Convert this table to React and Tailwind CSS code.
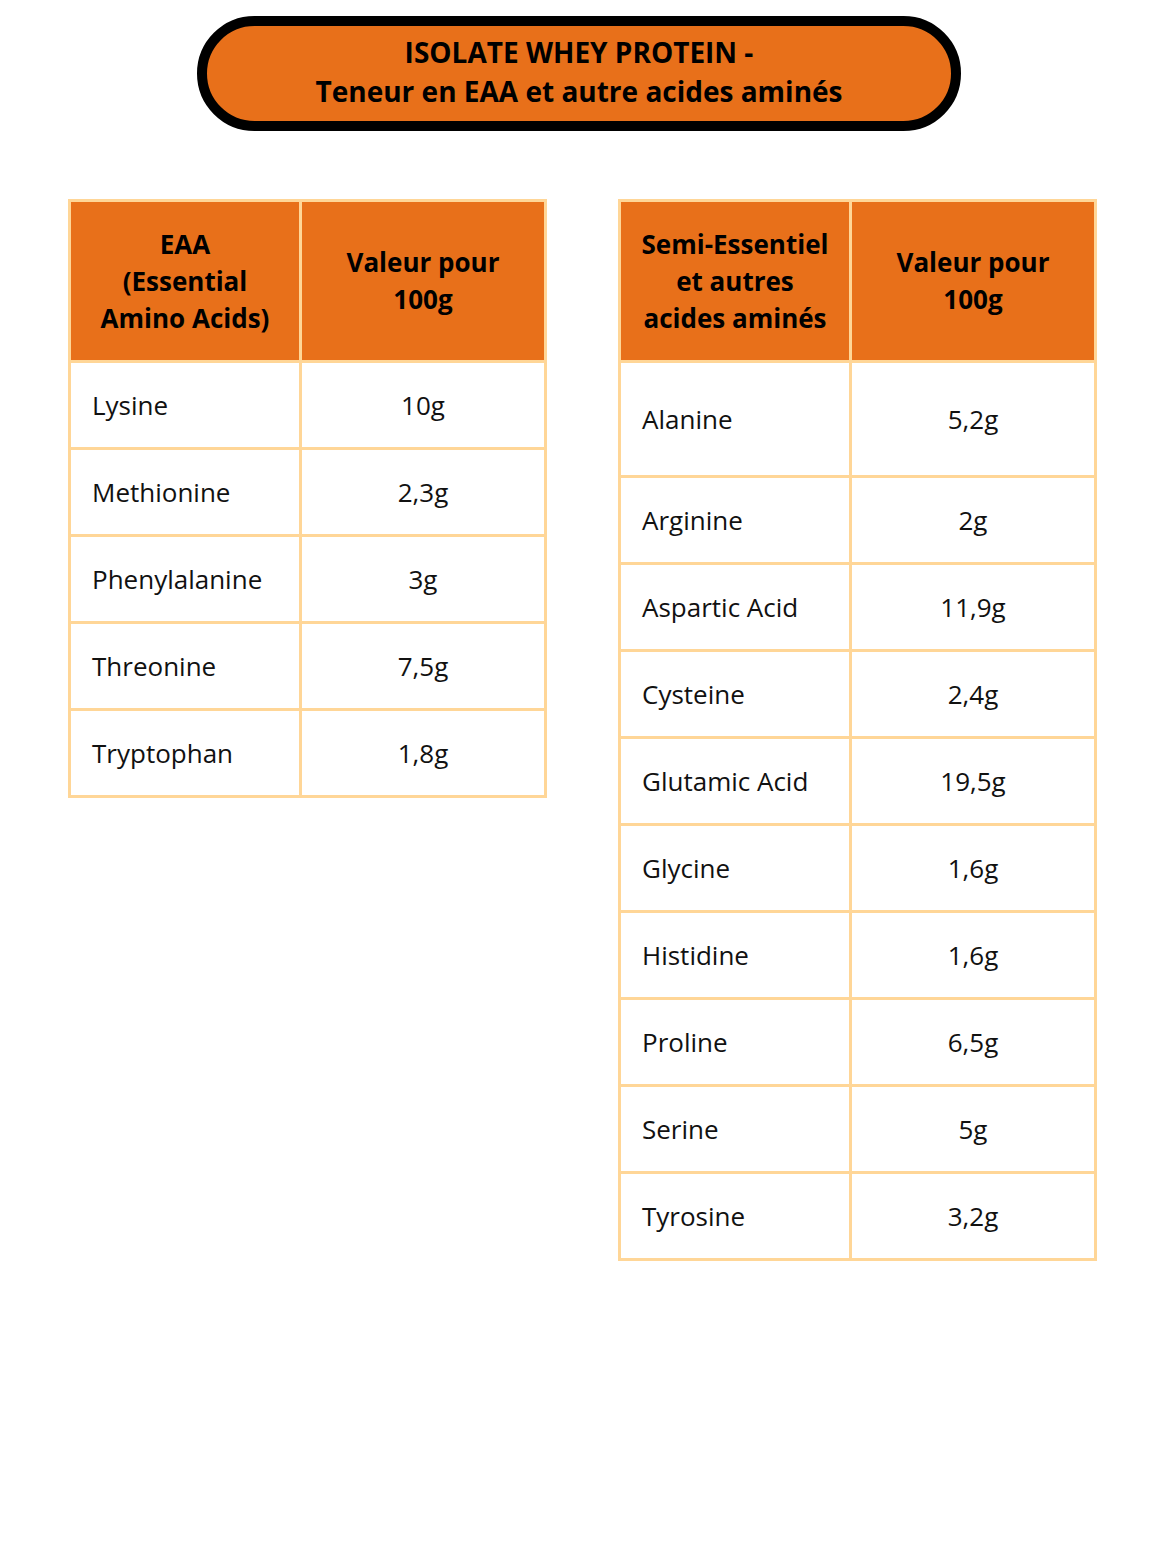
const eaa = [
  ["Lysine", "10g"],
  ["Methionine", "2,3g"],
  ["Phenylalanine", "3g"],
  ["Threonine", "7,5g"],
  ["Tryptophan", "1,8g"],
];

const semi = [
  ["Alanine", "5,2g"],
  ["Arginine", "2g"],
  ["Aspartic Acid", "11,9g"],
  ["Cysteine", "2,4g"],
  ["Glutamic Acid", "19,5g"],
  ["Glycine", "1,6g"],
  ["Histidine", "1,6g"],
  ["Proline", "6,5g"],
  ["Serine", "5g"],
  ["Tyrosine", "3,2g"],
];

function AminoTable({ head, rows, firstRowTall }) {
  return (
    <table className="table-fixed border-collapse w-[476px]">
      <colgroup>
        <col className="w-[231px]" />
        <col className="w-[245px]" />
      </colgroup>
      <thead>
        <tr className="h-[161px] bg-[#e8701a]">
          <th className="border-[3px] border-[#ffd697] px-2 text-[26px] leading-[37px] font-bold text-black text-center">
            {head}
          </th>
          <th className="border-[3px] border-[#ffd697] px-2 text-[26px] leading-[37px] font-bold text-black text-center">
            Valeur pour
            <br />
            100g
          </th>
        </tr>
      </thead>
      <tbody>
        {rows.map(([name, val], i) => (
          <tr
            key={name}
            className={firstRowTall && i === 0 ? "h-[115px]" : "h-[87px]"}
          >
            <td className="border-[3px] border-[#ffd697] pl-[21px] text-[26px] text-[#111]">
              {name}
            </td>
            <td className="border-[3px] border-[#ffd697] text-center text-[26px] text-[#111]">
              {val}
            </td>
          </tr>
        ))}
      </tbody>
    </table>
  );
}

export default function App() {
  return (
    <div
      className="w-[1164px] h-[1552px] bg-white"
      style={{ fontFamily: '"Open Sans", "Noto Sans", sans-serif' }}
    >
      {/* Title pill */}
      <div className="pt-[16px] flex justify-center">
        <div className="ml-[-6px] w-[764px] h-[115px] rounded-full border-[10px] border-black bg-[#e8701a] pb-[4px] flex flex-col items-center justify-center">
          <p className="text-[28px] leading-[39px] font-bold text-black">
            ISOLATE WHEY PROTEIN -
          </p>
          <p className="text-[28px] leading-[39px] font-bold text-black">
            Teneur en EAA et autre acides aminés
          </p>
        </div>
      </div>

      {/* Tables */}
      <div className="mt-[68px] pl-[68px] flex items-start gap-[71px]">
        <AminoTable
          head={
            <>
              EAA
              <br />
              (Essential
              <br />
              Amino Acids)
            </>
          }
          rows={eaa}
        />
        <AminoTable
          head={
            <>
              Semi-Essentiel
              <br />
              et autres
              <br />
              acides aminés
            </>
          }
          rows={semi}
          firstRowTall
        />
      </div>
    </div>
  );
}
